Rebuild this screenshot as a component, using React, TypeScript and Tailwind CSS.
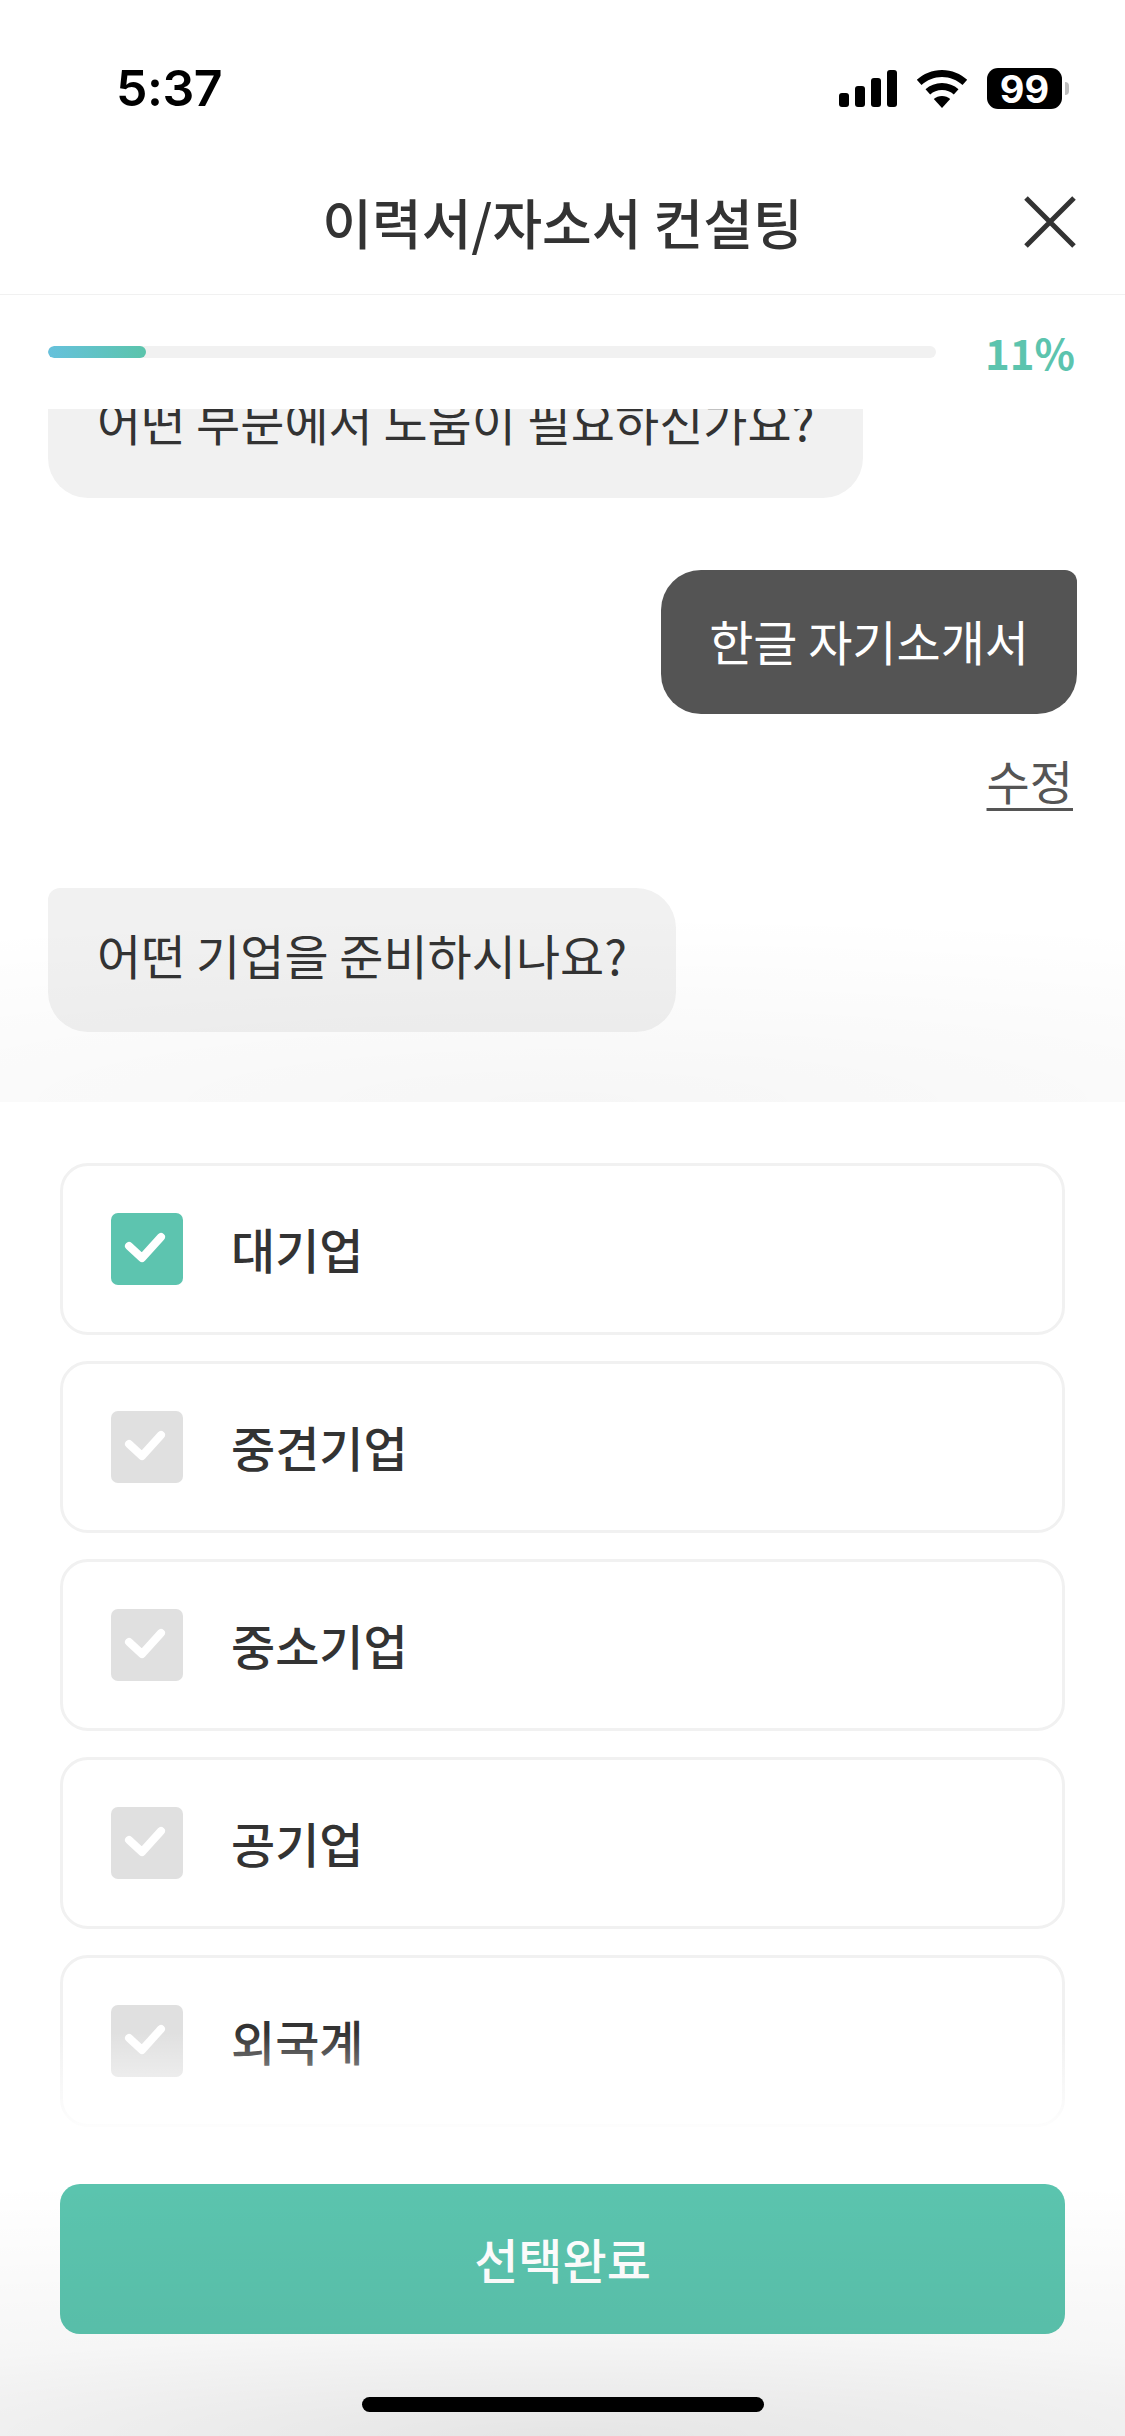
import type { ReactNode } from "react";

const options = ["대기업", "중견기업", "중소기업", "공기업", "외국계"];
const kr = "font-['Noto_Sans_CJK_KR','Noto_Sans',sans-serif]";

function StatusBar() {
  return (
    <div className="flex h-[190px] shrink-0 items-start justify-between pt-[58px] pr-[56px] pl-[116px]">
      <span className="font-['Inter',sans-serif] text-[50px] leading-[60px] font-semibold tracking-[-0.5px] text-black">
        5:37
      </span>
      <div className="mt-[10px] flex items-start">
        <svg width="58" height="37" viewBox="0 0 58 37" className="mt-[2px]" fill="#000">
          <rect x="0" y="23" width="10" height="14" rx="3" />
          <rect x="16" y="16" width="10" height="21" rx="3" />
          <rect x="32" y="8" width="10" height="29" rx="3" />
          <rect x="48" y="0" width="10" height="37" rx="3" />
        </svg>
        <svg width="52" height="38" viewBox="0 0 52 38" className="mt-[2px] ml-[19px]" fill="#000">
          <path d="M26 0C16 0 7.5 3.8 0.8 9.8L5.5 15C11 10 18 7 26 7s15 3 20.5 8l4.7-5.2C44.500 3.800 36 0 26 0z" />
          <path d="M26 13c-6.500 0-12 2.300-16.500 6.200l4.700 5.200C17.300 21.700 21.400 20 26 20s8.700 1.700 11.800 4.400l4.700-5.200C38 15.300 32.500 13 26 13z" />
          <path d="M26 26c-3.200 0-6 1.100-8.200 3L26 38l8.200-9c-2.200-1.900-5-3-8.200-3z" />
        </svg>
        <div className="ml-[19px] flex items-center">
          <span className="flex h-[41px] w-[75px] items-center justify-center rounded-[11px] bg-black font-['Inter',sans-serif] text-[38px] leading-none font-bold text-white">
            99
          </span>
          <span className="ml-[3px] h-[13px] w-[4px] rounded-r-[4px] bg-[#bdbdbd]" />
        </div>
      </div>
    </div>
  );
}

function Header() {
  return (
    <div className="relative flex h-[105px] shrink-0 items-start justify-center border-b-[1.5px] border-[#f1f1f1]">
      <span className={`${kr} -mt-[4px] text-[54px] leading-[72px] font-medium text-[#333333]`}>
        이력서/자소서 컨설팅
      </span>
      <svg width="52" height="52" viewBox="0 0 52 52" className="absolute top-[6px] right-[49px]">
        <path d="M2 2L50 50M50 2L2 50" stroke="#333333" strokeWidth="5" fill="none" />
      </svg>
    </div>
  );
}

function Progress() {
  return (
    <div className="flex h-[114px] shrink-0 items-start pr-[50px] pl-[48px]">
      <div className="mt-[51px] h-[12px] w-[888px] overflow-hidden rounded-full bg-[#f1f1f1]">
        <div className="h-full w-[98px] rounded-full bg-gradient-to-r from-[#66c1dc] to-[#5bc4ab]" />
      </div>
      <span className={`${kr} mt-[27px] ml-auto text-[42px] leading-[60px] font-bold text-[#5cc4ae]`}>
        11%
      </span>
    </div>
  );
}

function Bubble({ mine, children }: { mine?: boolean; children: ReactNode }) {
  return (
    <div
      className={
        mine
          ? `${kr} flex h-[144px] shrink-0 items-center self-end rounded-[40px] rounded-tr-[12px] bg-[#545454] px-[48px] pb-[4px] text-[48px] text-white`
          : `${kr} flex h-[144px] shrink-0 items-center self-start rounded-[40px] rounded-tl-[12px] bg-[#f1f1f1] px-[49px] pb-[12px] text-[48px] text-[#333333]`
      }
    >
      {children}
    </div>
  );
}

function Check({ on }: { on: boolean }) {
  return (
    <span
      className={`flex size-[72px] shrink-0 items-center justify-center rounded-[7px] ${on ? "bg-[#5dc4af]" : "bg-[#e0e0e0]"}`}
    >
      <svg width="72" height="72" viewBox="0 0 72 72">
        <path
          d="M18 33L31 45L50 24"
          fill="none"
          stroke="#ffffff"
          strokeWidth="8"
          strokeLinecap="round"
          strokeLinejoin="round"
        />
      </svg>
    </span>
  );
}

export default function App() {
  return (
    <div className="relative flex h-[2436px] w-[1125px] flex-col overflow-hidden bg-white">
      <StatusBar />
      <Header />
      <Progress />

      {/* 대화 영역: 위로 밀려 잘림 */}
      <div className="relative flex h-[693px] shrink-0 flex-col justify-end overflow-hidden px-[48px] pb-[70px]">
        <Bubble>어떤 부문에서 도움이 필요하신가요?</Bubble>
        <div className="mt-[72px] flex shrink-0 flex-col">
          <Bubble mine>한글 자기소개서</Bubble>
        </div>
        <span
          className={`${kr} mt-[31px] mr-[4px] shrink-0 self-end text-[47px] leading-[70px] text-[#555555] underline decoration-[3px] underline-offset-[8px]`}
        >
          수정
        </span>
        <div className="mt-[73px] flex shrink-0 flex-col">
          <Bubble>어떤 기업을 준비하시나요?</Bubble>
        </div>
        <div className="pointer-events-none absolute inset-x-0 bottom-0 h-[190px] bg-[radial-gradient(ellipse_120%_100%_at_50%_100%,rgba(0,0,0,0.035),rgba(0,0,0,0))]" />
      </div>

      {/* 선택지 */}
      <div className="relative h-[1082px] shrink-0 overflow-hidden">
        <div className="flex flex-col gap-[26px] px-[60px] pt-[61px]">
          {options.map((o, i) => (
            <div
              key={o}
              className="flex h-[172px] shrink-0 items-center rounded-[28px] border-[3px] border-[#f1f1f1] bg-white pl-[48px]"
            >
              <Check on={i === 0} />
              <span className={`${kr} mb-[3px] ml-[48px] text-[48px] font-medium text-[#333333]`}>{o}</span>
            </div>
          ))}
        </div>
        <div className="pointer-events-none absolute inset-x-0 top-[930px] h-[110px] bg-gradient-to-b from-white/0 to-white" />
      </div>

      <button
        className={`${kr} mx-[60px] flex h-[150px] shrink-0 items-center justify-center rounded-[20px] bg-[#5bc4ae] pb-[2px] text-[48px] font-medium text-white`}
      >
        선택완료
      </button>

      <div className="pointer-events-none absolute inset-x-0 bottom-0 h-[260px] bg-[radial-gradient(ellipse_200%_100%_at_50%_100%,rgba(0,0,0,0.1),rgba(0,0,0,0.035)_40%,rgba(0,0,0,0))]" />
      <div className="absolute top-[2397px] left-[362px] h-[15px] w-[402px] rounded-full bg-black" />
    </div>
  );
}
